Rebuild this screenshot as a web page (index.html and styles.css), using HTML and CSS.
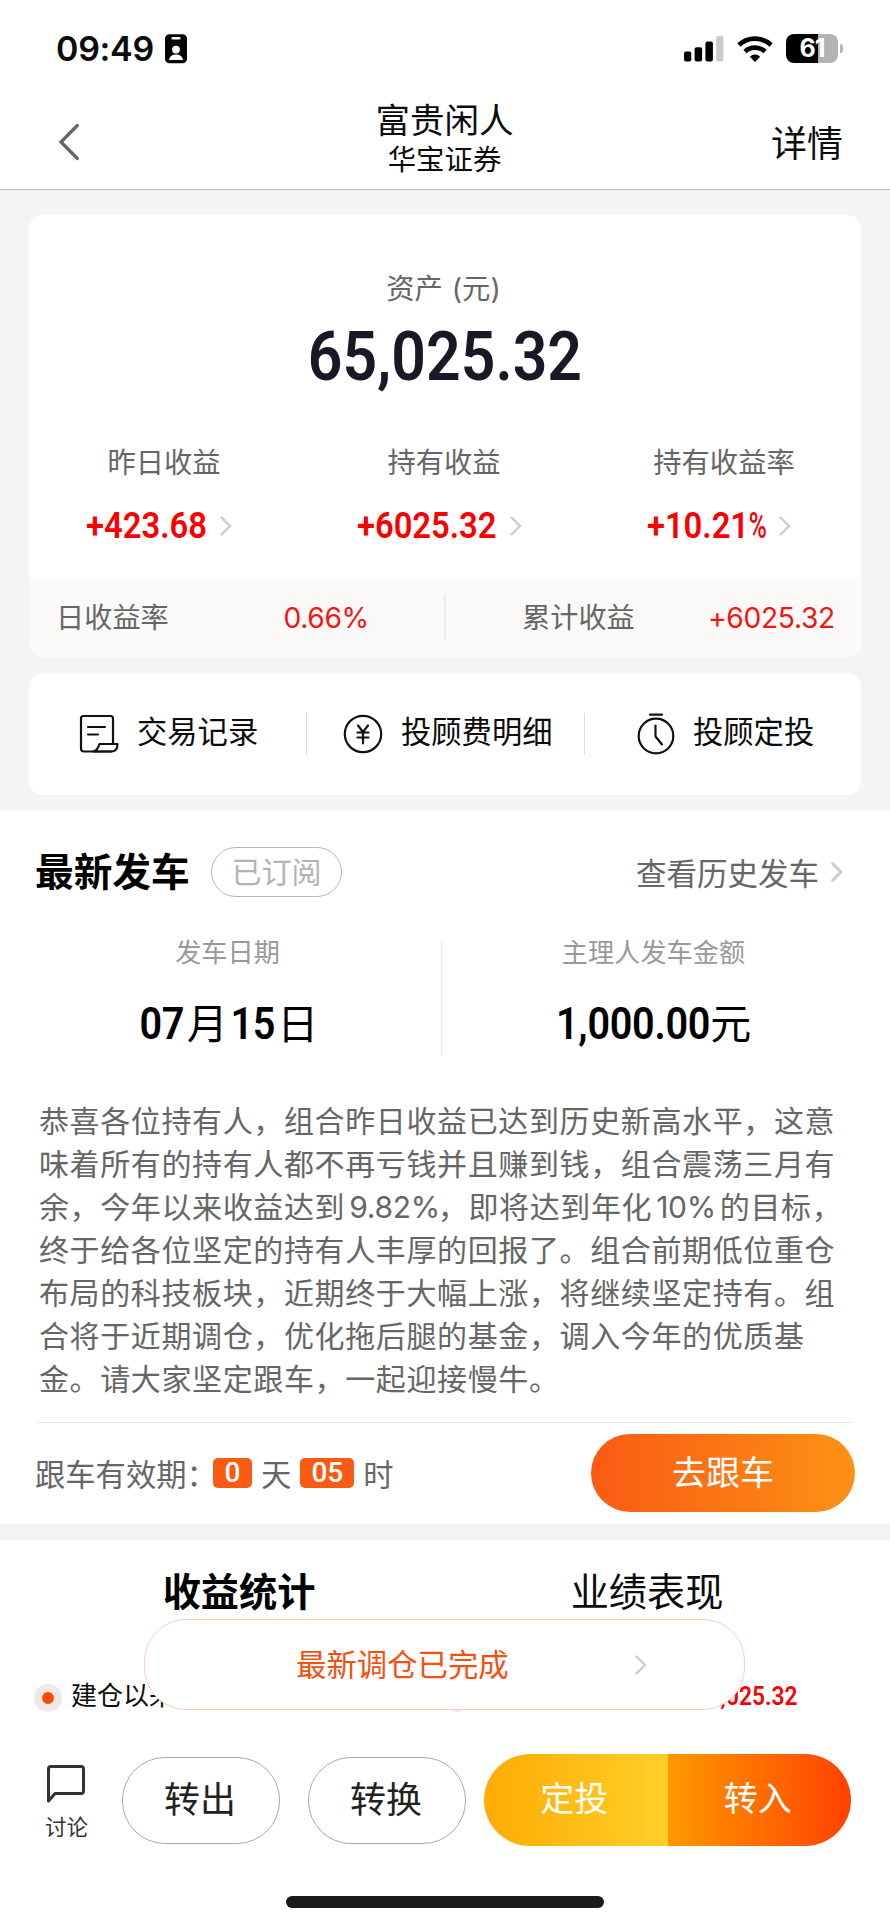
FILE: index.html
```html
<!DOCTYPE html>
<html lang="zh-CN">
<head>
	<meta charset="UTF-8">
	<title>富贵闲人</title>
	<link rel="stylesheet" href="styles.css">
</head>
<body>
<div class="page">
	<!-- 状态栏 -->
	<div class="status">
		<span class="time">09:49</span>
		<svg class="card-icon" width="22" height="30" viewBox="0 0 22 30">
			<rect width="22" height="29" y="0.3" rx="4.5"/>
			<rect x="6.5" y="3" width="9" height="2.6" rx="1.3" fill="#fff"/>
			<circle cx="11" cy="15.6" r="3.9" fill="#fff"/>
			<path d="M4 26c.6-4 3.5-5.600 7-5.600s6.400 1.600 7 5.600z" fill="#fff"/>
		</svg>
		<svg class="signal" width="40" height="26" viewBox="0 0 40 26">
			<rect x="0" y="15.500" width="7.300" height="10" rx="2"/>
			<rect x="10.600" y="11.300" width="7.500" height="14.200" rx="2"/>
			<rect x="21.400" y="5.500" width="7.500" height="20" rx="2"/>
			<rect x="32.200" y="0" width="7.300" height="25.500" rx="2" fill="#ccc"/>
		</svg>
		<svg class="wifi" width="36" height="26" viewBox="0 0 36 26" fill="none" stroke="#000" stroke-width="4.800">
			<path d="M1.900 9C10.900 0.600 25.100 0.600 34.100 9"/>
			<path d="M8 15.600C13.600 10.400 22.400 10.400 28 15.600"/>
			<path d="M12.800 20.800Q18 16.300 23.200 20.800L18 26z" fill="#000" stroke="none"/>
		</svg>
		<div class="battery"><span>61</span></div>
		<i class="nub"></i>
	</div>

	<!-- 导航 -->
	<div class="nav">
		<svg width="22" height="38" viewBox="0 0 22 38" fill="none" stroke="#666" stroke-width="3.300" stroke-linecap="round"><path d="M19.300 2.500L3 19l16.300 16.500"/></svg>
		<div class="title">
			<h1>富贵闲人</h1>
			<p>华宝证券</p>
		</div>
		<a class="detail">详情</a>
	</div>

	<div class="gray">
		<div class="card asset">
			<p class="asset-label">资产 (元)</p>
			<div class="total"><b class="din">65,025.32</b></div>
			<div class="three">
				<div>
					<p>昨日收益</p>
					<div class="val"><b class="din">+423.68</b><svg class="arrow" viewBox="0 0 12 20"><path d="M1.500 1.500L10 10l-8.500 8.500"/></svg></div>
				</div>
				<div>
					<p>持有收益</p>
					<div class="val"><b class="din">+6025.32</b><svg class="arrow" viewBox="0 0 12 20"><path d="M1.500 1.500L10 10l-8.500 8.500"/></svg></div>
				</div>
				<div>
					<p>持有收益率</p>
					<div class="val"><b class="din">+10.21<span class="pct">%</span></b><svg class="arrow" viewBox="0 0 12 20"><path d="M1.500 1.500L10 10l-8.500 8.500"/></svg></div>
				</div>
			</div>
			<div class="strip">
				<div class="left"><span>日收益率</span><em>0.66%</em></div>
				<div class="right"><span>累计收益</span><em>+6025.32</em></div>
			</div>
		</div>

		<div class="card links">
			<a class="l1">
				<svg width="40" height="40" viewBox="0 0 40 40" fill="none" stroke="#111" stroke-width="2.200" stroke-linejoin="round" stroke-linecap="round">
					<path d="M34 29V4.500Q34 2 31.500 2H4.500Q2 2 2 4.500v30Q2 37.500 5 37.500h27"/>
					<path d="M20.500 30H38.500q0 7.500-6 7.500H14.500q4-1 6-7.500z"/>
					<path d="M9 13h17M9 20.500h10"/>
				</svg>
				<span>交易记录</span>
			</a>
			<a class="l2">
				<svg width="40" height="40" viewBox="0 0 40 40" fill="none" stroke="#111" stroke-width="2.200" stroke-linecap="round">
					<circle cx="20" cy="20" r="18.200"/>
					<path d="M15 11.500L20 18l5-6.500M20 18v11.500M14.500 18.500h11M14.500 23.500h11"/>
				</svg>
				<span>投顾费明细</span>
			</a>
			<a class="l3">
				<svg width="38" height="42" viewBox="0 0 38 42" fill="none" stroke="#111" stroke-width="2.200" stroke-linecap="round">
					<circle cx="19" cy="23" r="17.300"/>
					<path d="M13 1.600h12M18.500 12.500v11l6.500 8"/>
				</svg>
				<span>投顾定投</span>
			</a>
		</div>
	</div>

	<!-- 最新发车 -->
	<div class="latest">
		<div class="head">
			<h2>最新发车</h2>
			<span class="tag">已订阅</span>
			<a>查看历史发车</a>
			<svg class="arrow" viewBox="0 0 12 20"><path d="M1.500 1.500L10 10l-8.500 8.500"/></svg>
		</div>
		<div class="info">
			<div>
				<p>发车日期</p>
				<div class="num"><b class="din">07</b>月<b class="din">15</b>日</div>
			</div>
			<div>
				<p>主理人发车金额</p>
				<div class="num money"><b class="din">1,000.00</b>元</div>
			</div>
		</div>
		<p class="text">恭喜各位持有人，组合昨日收益已达到历史新高水平，这意<br>味着所有的持有人都不再亏钱并且赚到钱，组合震荡三月有<br>余，今年以来收益达到<i class="rate">9.82%</i>，即将达到年化<i>10%</i>的目标，<br>终于给各位坚定的持有人丰厚的回报了。组合前期低位重仓<br>布局的科技板块，近期终于大幅上涨，将继续坚定持有。组<br>合将于近期调仓，优化拖后腿的基金，调入今年的优质基<br>金。请大家坚定跟车，一起迎接慢牛。</p>
		<div class="follow">
			<span class="valid">跟车有效期：</span>
			<b class="day">0</b><span>天</span><b class="hour">05</b><span>时</span>
			<a class="go">去跟车</a>
		</div>
	</div>

	<!-- 收益统计 -->
	<div class="stat">
		<div class="tabs">
			<span class="active">收益统计</span>
			<span>业绩表现</span>
		</div>
		<div class="since">
			<i class="dot"></i>
			<span>建仓以来</span>
			<i class="dot2"></i>
			<b class="din">+6,025.32</b>
		</div>
		<div class="toast">
			<span>最新调仓已完成</span>
			<svg class="arrow" viewBox="0 0 12 20"><path d="M1.500 1.500L10 10l-8.500 8.500"/></svg>
		</div>
	</div>

	<!-- 底部操作 -->
	<div class="bottom">
		<div class="talk">
			<svg width="40" height="42" viewBox="0 0 40 42" fill="none" stroke="#333" stroke-width="3" stroke-linejoin="round"><path d="M2.500 37V5q0-2.500 2.500-2.500h30q2.500 0 2.500 2.500v22q0 2.500-2.500 2.500H9z"/></svg>
			<span>讨论</span>
		</div>
		<a class="btn">转出</a>
		<a class="btn">转换</a>
		<div class="double">
			<a>定投</a>
			<a>转入</a>
		</div>
	</div>
	<div class="home"></div>
</div>
</body>
</html>
```
FILE: styles.css
```css
*{
	margin: 0;
	padding: 0;
	box-sizing: border-box;
}
body{
	background: #fff;
	color: #0c0c0c;
	font-family: Inter, "Noto Sans CJK SC", sans-serif;
}
i, em{
	font-style: normal;
}
svg{
	display: block;
	flex: none;
}
.page{
	width: 890px;
	height: 1925px;
	overflow: hidden;
}
.din{
	display: inline-block;
	font-family: Roboto, sans-serif;
	font-weight: 600;
}
.arrow{
	width: 12px;
	height: 20px;
	fill: none;
	stroke: #ccc;
	stroke-width: 2.4;
	stroke-linecap: round;
}

/* 状态栏 */
.status{
	height: 97px;
	padding: 0 47px 0 56px;
	display: flex;
	align-items: center;
}
.time{
	font-size: 34px;
	font-weight: 600;
	letter-spacing: -0.3px;
	width: 109px;
}
.signal{
	margin-left: auto;
}
.wifi{
	margin: 0 13px 0 13px;
}
.battery{
	width: 52px;
	height: 29px;
	border-radius: 8px;
	background: linear-gradient(90deg, #000 32px, #b3b3b3 32px);
	color: #fff;
	font-size: 25px;
	font-weight: 700;
	line-height: 29px;
	text-align: center;
	letter-spacing: -1px;
}
.nub{
	width: 3px;
	height: 9px;
	margin-left: 2px;
	border-radius: 0 4px 4px 0;
	background: #b3b3b3;
}

/* 导航 */
.nav{
	height: 93px;
	border-bottom: 1px solid #b8b8b8;
	display: grid;
	grid-template-columns: 200px 1fr 200px;
	padding: 0 47px 0 58px;
}
.nav svg{
	margin-top: 26px;
}
.title{
	text-align: center;
	padding-top: 2px;
	margin-left: -12px;
}
.title h1{
	font-size: 34.500px;
	font-weight: 400;
	line-height: 43px;
}
.title p{
	font-size: 28.400px;
	line-height: 36px;
}
.detail{
	font-size: 36px;
	line-height: 94px;
	text-align: right;
}

.gray{
	background: #f4f4f4;
	height: 621px;
	padding: 25px 29px 0;
}
.card{
	background: #fff;
	border-radius: 14px;
	overflow: hidden;
}
.asset{
	height: 442px;
	margin-bottom: 16px;
}
.asset-label{
	padding-top: 56px;
	padding-right: 3px;
	font-size: 28.300px;
	line-height: 36px;
	word-spacing: 1px;
	color: #666;
	text-align: center;
}
.total{
	height: 72px;
	margin-top: 14px;
	line-height: 72px;
	text-align: center;
	color: #171a26;
}
.total .din{
	font-size: 69px;
	transform: scaleX(0.88);
}
.three{
	display: grid;
	grid-template-columns: repeat(3, 280px);
	margin: 50px -5px 0;
	text-align: center;
	height: 134px;
}
.three p{
	font-size: 28.300px;
	line-height: 40px;
	color: #666;
}
.val{
	display: flex;
	justify-content: center;
	align-items: center;
	height: 40px;
	margin: 23px 16px 0 0;
	color: #f90000;
}
.val .din{
	font-size: 36px;
	transform: scaleX(0.91);
	margin-right: 7px;
}
.pct{
	display: inline-block;
	font-weight: 500;
	transform: scaleX(0.75);
	transform-origin: left;
	margin-right: -8px;
}
.strip{
	height: 80px;
	background: #fbfaf8;
	display: grid;
	grid-template-columns: 417px 1fr;
	align-items: center;
	font-size: 28.200px;
	color: #666;
}
.strip > div{
	display: flex;
	justify-content: space-between;
	line-height: 49px;
	height: 47px;
}
.strip .left{
	padding: 0 75px 0 27px;
	border-right: 2px solid #ececec;
}
.strip .right{
	padding: 0 26px 0 76px;
}
.strip em{
	color: #f51414;
	letter-spacing: -0.300px;
}
.links{
	height: 122px;
	display: grid;
	grid-template-columns: 277px 278px 277px;
	align-items: center;
}
.links a{
	display: flex;
	align-items: center;
	height: 42px;
	font-size: 30.300px;
	line-height: 38px;
}
.links a + a{
	border-left: 1px solid #ddd;
}
.links span{
	margin: 0 0 4px 18px;
}
.l1{
	padding-left: 50px;
}
.l2{
	padding-left: 36px;
}
.l3{
	padding-left: 52px;
}

/* 最新发车 */
.latest{
	height: 713px;
	padding: 36px 36px 0;
}
.head{
	display: flex;
	align-items: center;
	height: 50px;
}
.head h2{
	font-size: 38.700px;
	line-height: 50px;
	width: 175px;
	color: #000;
	text-indent: -1px;
}
.tag{
	width: 131px;
	height: 50px;
	line-height: 48px;
	text-align: center;
	border: 1px solid #b5b5b5;
	border-radius: 25px;
	font-size: 30px;
	color: #b3b3b3;
}
.head a{
	margin-left: auto;
	margin-right: 12px;
	font-size: 30.500px;
	color: #666;
}
.head .arrow{
	margin-right: 11px;
	stroke-width: 3;
}
.info{
	display: grid;
	grid-template-columns: 406px 1fr;
	height: 116px;
	margin-top: 43px;
	text-align: center;
}
.info > div:first-child{
	border-right: 1px solid #ebebeb;
	padding-right: 22px;
}
.info > div:last-child{
	padding-left: 11px;
}
.info p{
	font-size: 26.200px;
	line-height: 26px;
	color: #999;
}
.num{
	margin-top: 28px;
	height: 60px;
	line-height: 60px;
	font-size: 41px;
	color: #000;
	white-space: nowrap;
}
.num .din{
	font-size: 44px;
	transform: scaleX(0.9);
}
.info .num{
	letter-spacing: -0.300px;
}
.money .din{
	transform-origin: left;
	margin-right: -17px;
}
.text{
	margin-top: 44px;
	padding-left: 3px;
	font-size: 30px;
	line-height: 43px;
	letter-spacing: 0.62px;
	color: #666;
	white-space: nowrap;
}
.text i{
	margin: 0 4px;
	letter-spacing: -0.300px;
}
.text .rate{
	margin-right: -2px;
}
.follow{
	margin: 21px 0 0 2px;
	width: 815px;
	border-top: 1px solid #e8e8e8;
	display: flex;
	align-items: center;
	height: 101px;
	font-size: 30.300px;
	color: #666;
	white-space: nowrap;
}
.valid{
	margin-left: -3px;
	width: 178px;
}
.follow b{
	height: 30px;
	border-radius: 5px;
	background: #fa5a14;
	color: #fff;
	font: 500 28px/30px Roboto, sans-serif;
	text-align: center;
}
.follow .day{
	width: 39px;
}
.follow .hour{
	width: 54px;
}
.follow b + span{
	margin: 0 9px;
}
.go{
	width: 264px;
	height: 78px;
	margin-left: auto;
	margin-right: -2px;
	border-radius: 39px;
	background: linear-gradient(90deg, #fb5a14, #fb9214);
	color: #fff;
	font-size: 34px;
	line-height: 77px;
	text-align: center;
}

/* 收益统计 */
.stat{
	position: relative;
	height: 206px;
	border-top: 16px solid #f4f4f4;
}
.tabs{
	display: grid;
	grid-template-columns: 1fr 1fr;
	padding: 27px 39px 0 35px;
	font-size: 38.200px;
	line-height: 50px;
	text-align: center;
}
.tabs .active{
	font-weight: 700;
	color: #000;
}
.since{
	display: flex;
	align-items: center;
	height: 30px;
	margin-top: 66px;
	padding: 0 93px 0 34px;
	font-size: 26px;
}
.since span{
	width: 93px;
	height: 34px;
	line-height: 30px;
	overflow: hidden;
	white-space: nowrap;
}
.dot{
	width: 28px;
	height: 28px;
	border-radius: 50%;
	background: #ff4b00;
	border: 8px solid #eee9e7;
	margin-right: 9px;
}
.dot2{
	width: 28px;
	height: 28px;
	border-radius: 50%;
	background: #e8ebf2;
	margin-left: 280px;
}
.since .din{
	margin-left: auto;
	margin-bottom: 3px;
	font-size: 25px;
	color: #f90000;
	transform: scaleX(0.91);
	transform-origin: right;
}
.toast{
	position: absolute;
	left: 144px;
	top: 79px;
	width: 601px;
	height: 91px;
	border: 1px solid #fdcdbd;
	border-radius: 42px;
	background: #fff;
	display: flex;
	align-items: center;
	justify-content: space-between;
	padding: 0 97px 0 151px;
	font-size: 30.400px;
	color: #f4500f;
}
.toast span{
	margin-bottom: 4px;
}

/* 底部操作 */
.bottom{
	display: flex;
	align-items: center;
	height: 140px;
	padding-left: 45px;
}
.talk{
	width: 77px;
	font-size: 21.500px;
	line-height: 26px;
	color: #333;
}
.talk svg{
	margin: 4px 0 8px 1px;
}
.btn{
	width: 158px;
	height: 87px;
	margin-right: 28px;
	border: 1px solid #aaa;
	border-radius: 43px;
	font-size: 36px;
	line-height: 84px;
	text-align: center;
	text-indent: -2px;
	color: #222;
}
.double{
	display: flex;
	width: 367px;
	height: 92px;
	margin-left: -10px;
	border-radius: 46px;
	overflow: hidden;
	color: #fff;
	font-size: 34px;
	line-height: 90px;
	text-align: center;
	text-indent: -3px;
}
.double a{
	flex: 1;
	background: linear-gradient(90deg, #ffab04, #ffd028);
}
.double a + a{
	background: linear-gradient(90deg, #ff9800, #ff4200);
}
.home{
	width: 318px;
	height: 12px;
	margin: 26px auto 0;
	border-radius: 6px;
	background: #1a1a1a;
}
```
